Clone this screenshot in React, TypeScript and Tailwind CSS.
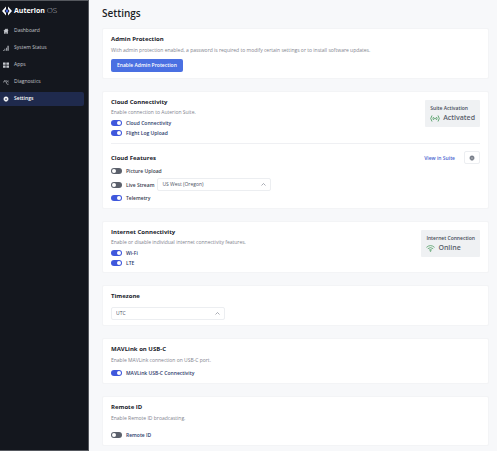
import { useState, type ReactNode } from "react";

function Toggle({ id, label, initial, tone }: { id: string; label: string; initial: boolean; tone: string }) {
  const [on, setOn] = useState(initial);
  return (
    <div className="flex h-[10px] items-center gap-1">
      <input
        id={id}
        type="checkbox"
        role="switch"
        checked={on}
        onChange={(e) => setOn(e.target.checked)}
        className="flex h-[6px] w-[11px] shrink-0 appearance-none items-center justify-start rounded-full bg-[#5b606b] px-px before:h-[4px] before:w-[4px] before:rounded-full before:bg-white checked:justify-end checked:bg-[#3f58dc]"
      />
      <label htmlFor={id} className={`whitespace-nowrap text-[5px] leading-[10px] font-semibold ${tone}`}>
        {label}
      </label>
    </div>
  );
}

function Dropdown({ label, options }: { label: string; options: string[] }) {
  return (
    <div className="relative w-[114px]">
      <select
        aria-label={label}
        className="block h-[13px] w-full appearance-none rounded-[2px] border border-[#eceef1] bg-white pr-4 pl-1 text-[5px] leading-[11px] font-medium text-[#4c5363]"
      >
        {options.map((o) => (
          <option key={o}>{o}</option>
        ))}
      </select>
      <svg viewBox="0 0 10 6" className="pointer-events-none absolute top-[5px] right-[5px] h-[3px] w-[5px]" fill="none" stroke="#7b818c" strokeWidth="1.3">
        <path d="M1 5 5 1l4 4" />
      </svg>
    </div>
  );
}

function Card({ children }: { children: ReactNode }) {
  return <section className="rounded-[2px] border border-[#f3f4f6] bg-white px-2 py-[5px]">{children}</section>;
}

function Heading({ children }: { children: ReactNode }) {
  return <h2 className="text-[6px] leading-[10px] font-bold text-[#20232b]">{children}</h2>;
}

function Hint({ children }: { children: ReactNode }) {
  return <p className="text-[5px] leading-[10px] text-[#7f848e]">{children}</p>;
}

function Badge({ title, value, icon }: { title: string; value: string; icon: ReactNode }) {
  return (
    <div className="mt-[3px] h-[27px] shrink-0 rounded-[1px] bg-[#eff1f3] px-[5px] pt-[3px]">
      <p className="text-[5px] leading-[10px] font-semibold text-[#454b57]">{title}</p>
      <div className="flex items-center gap-[3px]">
        {icon}
        <span className="text-[7px] leading-[10px] font-semibold text-[#5a606c]">{value}</span>
      </div>
    </div>
  );
}

const nav = [
  {
    name: "Dashboard",
    icon: <path fill="currentColor" d="M8 1 1 8h2v7h4v-4h2v4h4V8h2l-2-2V2h-2v2z" />,
  },
  {
    name: "System Status",
    icon: <path fill="currentColor" d="M0 13h2v2H0zM4 10h2v5H4zM8 7h2v8H8zM12 2h3v13h-3z" />,
  },
  {
    name: "Apps",
    icon: <path fill="currentColor" d="M0 1h7v6H0zM9 1h7v6H9zM0 9h7v6H0zM9 9h7v6H9z" />,
  },
  {
    name: "Diagnostics",
    icon: <path fill="none" stroke="currentColor" strokeWidth="1.6" d="M0 8h3l2-5 4 7 5-6M9 10l2 4 4 0M10 3v4M14 8h2" />,
  },
  {
    name: "Settings",
    icon: (
      <>
        <circle cx="8" cy="8" r="4" fill="none" stroke="currentColor" strokeWidth="3.4" />
        <path stroke="currentColor" strokeWidth="3" d="M8 1v2M8 13v2M1 8h2M13 8h2M3 3l1 1M12 12l1 1M3 13l1-1M12 4l1-1" />
      </>
    ),
  },
];

export default function App() {
  return (
    <div className="flex min-h-screen bg-white pr-[2px] pb-px font-['Open_Sans','Noto_Sans',sans-serif]">
      <aside className="w-[89px] shrink-0 border-y border-r border-[#55585e] bg-[#14171e]">
        <div className="flex h-[19px] items-center gap-[2px] pl-[2px]">
          <svg viewBox="0 0 20 20" className="h-[10px] w-[10px]">
            <path fill="#fff" d="M8 1v5L5 10l3 4v5L0 10zM12 1v5l3 4-3 4v5l8-9z" />
            <path fill="#4b6be8" d="m10 6 3 4-3 4-3-4z" />
          </svg>
          <span className="text-[7px] leading-[10px] font-bold text-white">
            Auterion <span className="text-[8px] font-light text-[#b5b8bf]">OS</span>
          </span>
        </div>
        <nav className="mt-1 flex flex-col gap-[3px] pr-1">
          {nav.map((n) => (
            <a
              key={n.name}
              href="#"
              aria-current={n.name === "Settings" ? "page" : undefined}
              className="flex h-[14px] items-center gap-[5px] rounded-r-[2px] pl-[3px] text-[5px] font-medium text-[#c3c6cc] aria-[current=page]:bg-[#1f2a4d] aria-[current=page]:font-semibold aria-[current=page]:text-white"
            >
              <svg viewBox="0 0 16 16" className="h-[6px] w-[6px]">
                {n.icon}
              </svg>
              {n.name}
            </a>
          ))}
        </nav>
      </aside>

      <main className="min-w-0 flex-1 bg-[#f7f8fa] pt-[6px] pr-2 pb-[5px] pl-[13px]">
        <h1 className="text-[10px] leading-[14px] font-semibold text-[#1b1e26]">Settings</h1>
        <div className="mt-2 flex flex-col gap-3">
          <Card>
            <Heading>Admin Protection</Heading>
            <div className="mt-px">
              <Hint>
                With admin protection enabled, a password is required to modify certain settings or to install software updates.
              </Hint>
            </div>
            <button className="mt-1 mb-px block h-[13px] rounded-[2px] bg-[#4a70e2] px-[6px] text-[5px] leading-[13px] font-semibold text-white">
              Enable Admin Protection
            </button>
          </Card>

          <Card>
            <div className="flex justify-between border-b border-[#eff0f3] pb-[5px]">
              <div>
                <Heading>Cloud Connectivity</Heading>
                <Hint>Enable connection to Auterion Suite.</Hint>
                <div className="mt-px">
                  <Toggle id="cloud" label="Cloud Connectivity" initial tone="text-[#2c3a6b]" />
                  <Toggle id="log" label="Flight Log Upload" initial tone="text-[#2c3a6b]" />
                </div>
              </div>
              <Badge
                title="Suite Activation"
                value="Activated"
                icon={
                  <svg viewBox="0 0 20 14" className="h-[7px] w-[10px]" fill="none" stroke="#4a9a5e" strokeWidth="1.7">
                    <path d="M4 1Q-1 7 4 13M7 4Q5 7 7 10M16 1q5 6 0 12M13 4q2 3 0 6" />
                    <circle cx="10" cy="7" r="1" />
                  </svg>
                }
              />
            </div>
            <div className="mt-[7px] flex items-center justify-between">
              <Heading>Cloud Features</Heading>
              <div className="flex items-center gap-[9px]">
                <a href="#" className="text-[5px] leading-[10px] font-semibold text-[#4a5fd0]">
                  View in Suite
                </a>
                <button aria-label="Cloud settings" className="flex h-[13px] w-[16px] items-center justify-center rounded-[2px] border border-[#eceef1] text-[#747a86]">
                  <svg viewBox="0 0 16 16" className="h-[6px] w-[6px]">
                    {nav[4].icon}
                    <circle cx="8" cy="8" r="3" fill="currentColor" fillOpacity="0.6" />
                  </svg>
                </button>
              </div>
            </div>
            <div className="mt-[2px] flex flex-col gap-[2px]">
              <Toggle id="picture" label="Picture Upload" initial={false} tone="text-[#3a404e]" />
              <div className="flex items-center gap-[3px]">
                <Toggle id="stream" label="Live Stream" initial={false} tone="text-[#3a404e]" />
                <Dropdown label="Live stream region" options={["US West (Oregon)"]} />
              </div>
              <Toggle id="telemetry" label="Telemetry" initial tone="text-[#3a404e]" />
            </div>
          </Card>

          <Card>
            <div className="flex justify-between">
              <div>
                <Heading>Internet Connectivity</Heading>
                <Hint>Enable or disable individual internet connectivity features.</Hint>
                <div className="mt-px -mb-px">
                  <Toggle id="wifi" label="Wi-Fi" initial tone="text-[#2c3a6b]" />
                  <Toggle id="lte" label="LTE" initial tone="text-[#2c3a6b]" />
                </div>
              </div>
              <Badge
                title="Internet Connection"
                value="Online"
                icon={
                  <svg viewBox="0 0 20 15" className="h-[7px] w-[9px]" fill="none" stroke="#4a9a5e" strokeWidth="1.7">
                    <path d="M1 5q9-8 18 0M4 8q6-5 12 0M7 11q3-3 6 0" />
                    <circle cx="10" cy="13" r="1" />
                  </svg>
                }
              />
            </div>
          </Card>

          <Card>
            <Heading>Timezone</Heading>
            <div className="mt-[6px]">
              <Dropdown label="Timezone" options={["UTC"]} />
            </div>
          </Card>

          <Card>
            <Heading>MAVLink on USB-C</Heading>
            <div className="mt-px mb-[3px]">
              <Hint>Enable MAVLink connection on USB-C port.</Hint>
            </div>
            <Toggle id="mavlink" label="MAVLink USB-C Connectivity" initial tone="text-[#2c3a6b]" />
          </Card>

          <Card>
            <Heading>Remote ID</Heading>
            <div className="mt-px mb-[7px]">
              <Hint>Enable Remote ID broadcasting.</Hint>
            </div>
            <Toggle id="remote" label="Remote ID" initial={false} tone="text-[#2c3a6b]" />
          </Card>
        </div>
      </main>
    </div>
  );
}
